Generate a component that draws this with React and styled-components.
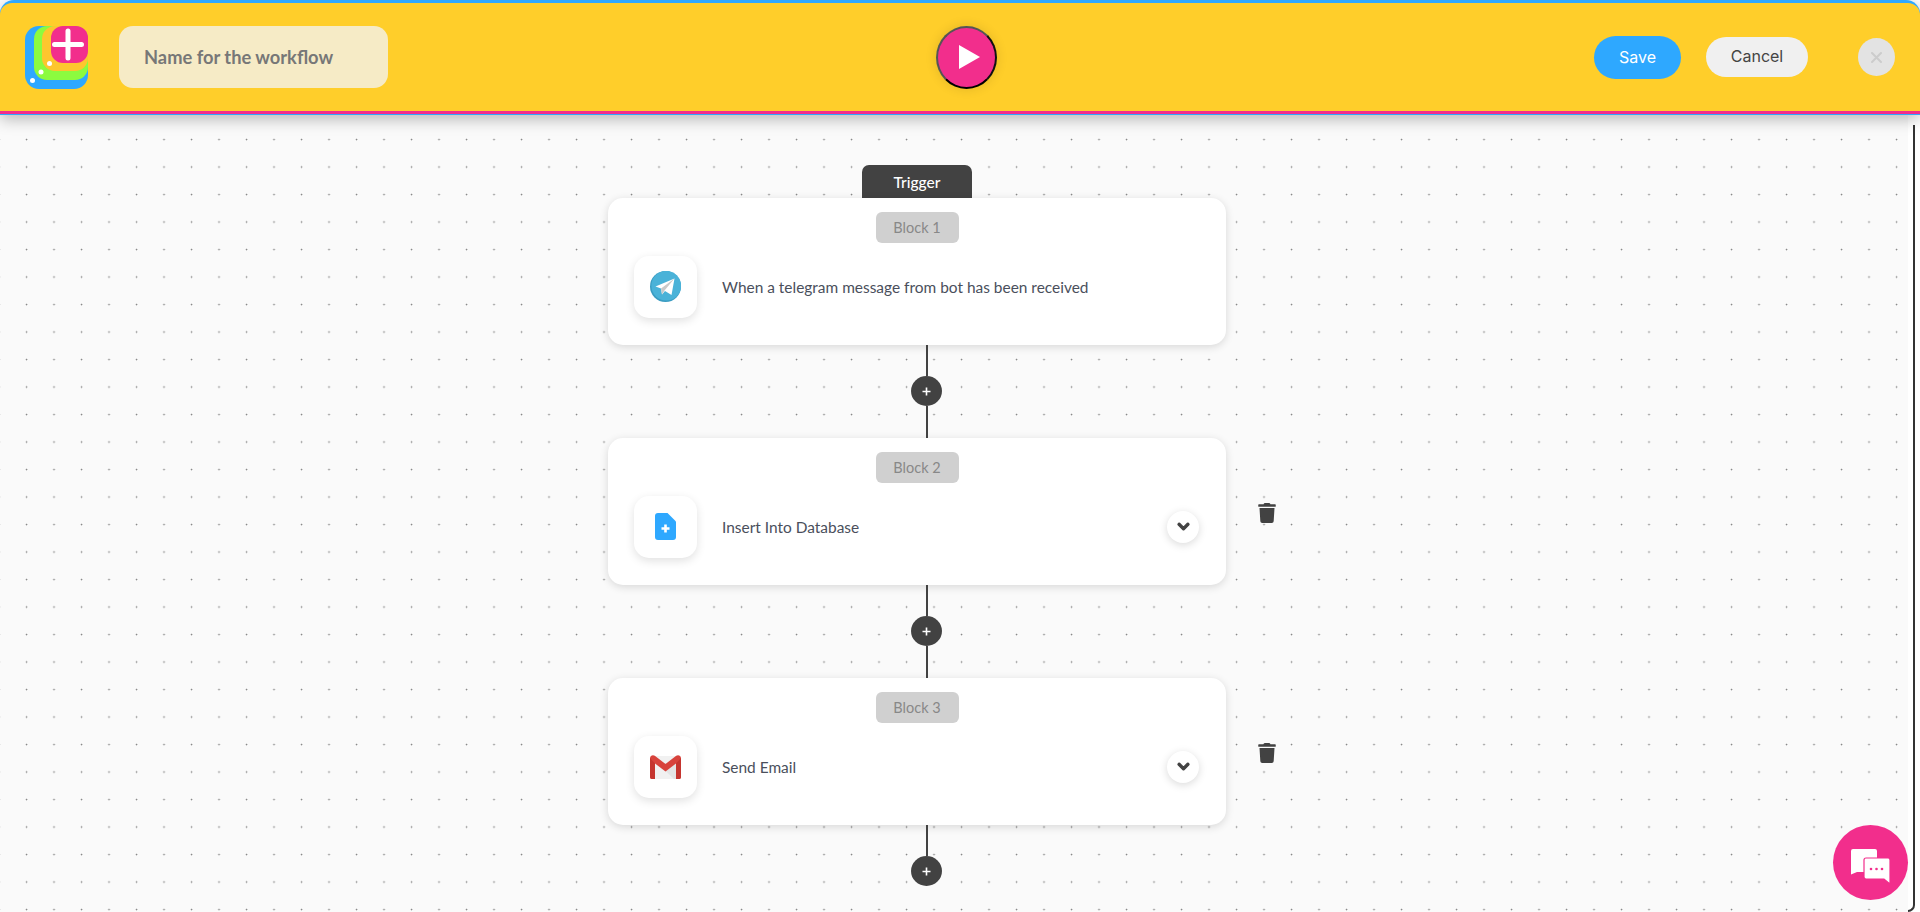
import React from "react";
import styled, { createGlobalStyle } from "styled-components";
import { FaTrash, FaChevronDown } from "react-icons/fa";

const Global = createGlobalStyle`
  html, body { margin: 0; padding: 0; background: #fff; overflow: hidden; }
  * { box-sizing: border-box; }
  body { font-family: "Lato", "Noto Sans", sans-serif; }
`;

const Page = styled.div`
  position: relative;
  width: 1920px;
  height: 912px;
  display: flex;
  flex-direction: column;
  overflow: hidden;
`;
const Header = styled.header`
  position: relative;
  z-index: 2;
  flex: 0 0 115px;
  display: flex;
  background: #2ea8ff;
  border-top: 3px solid #2ea8ff;
  border-bottom: 1px solid #2ea8ff;
  border-radius: 14px 14px 0 0;
  box-shadow: 0 4px 16px rgba(0, 0, 0, 0.28);
`;
const HeaderBar = styled.div`
  flex: 1;
  display: grid;
  grid-template-columns: 936px 61px 1fr;
  align-items: center;
  background: #ffce2a;
  border-bottom: 3px solid #f22e8c;
  border-radius: 12px 12px 0 0;
`;
const HeaderLeft = styled.div`
  display: flex;
  align-items: center;
  gap: 31px;
  padding-left: 25px;
`;
const HeaderRight = styled.div`
  display: flex;
  align-items: center;
  justify-content: flex-end;
  padding-right: 25px;
`;
const NameField = styled.div`
  width: 269px;
  height: 62px;
  display: flex;
  align-items: center;
  padding-left: 25px;
  border-radius: 14px;
  background: #f6ebc6;
  color: #777;
  font: 700 18.3px "Lato", sans-serif;
`;
const PlayButton = styled.button`
  width: 61px;
  height: 63px;
  padding: 0 0 0 5px;
  display: flex;
  align-items: center;
  justify-content: center;
  border-radius: 50%;
  background: #f22e8c;
  border: 2px solid;
  border-color: #555 #111 #000 #555;
  box-shadow: 0 0 12px rgba(0, 0, 0, 0.12);
`;
const SaveButton = styled.button`
  width: 87px;
  height: 43px;
  border: 0;
  border-radius: 22px;
  background: #2ea8ff;
  color: #fff;
  font: 400 16px "Inter", sans-serif;
`;
const CancelButton = styled.button`
  width: 102px;
  height: 40px;
  margin-left: 25px;
  padding: 0 0 2px;
  border: 0;
  border-radius: 20px;
  background: #f0f0f0;
  color: #444;
  font: 400 16px "Inter", sans-serif;
`;
const CloseButton = styled.button`
  width: 37px;
  height: 38px;
  margin-left: 50px;
  padding: 0;
  display: flex;
  align-items: center;
  justify-content: center;
  border: 0;
  border-radius: 50%;
  background: #e3e3e3;
`;
const Main = styled.main`
  flex: 1;
  display: flex;
  min-height: 0;
`;
const Canvas = styled.div`
  flex: 0 0 1908px;
  padding: 50px 0 0 608px;
  background-color: #fafafa;
  background-image: radial-gradient(circle at 1.5px 1.5px, #858585 0.7px, transparent 1.1px);
  background-size: 27.5px 27.5px;
  background-position: 25px 23px;
`;
const Rail = styled.div`
  flex: 1;
  padding: 10px 5px 0 0;
  background: #fff;
`;
const RailLine = styled.div`
  height: 100%;
  border-right: 2px solid #333;
  border-bottom: 2px solid #333;
  border-bottom-right-radius: 10px;
`;
const Flow = styled.div`
  width: 618px;
  display: flex;
  flex-direction: column;
  align-items: center;
`;
const TriggerTab = styled.div`
  width: 110px;
  height: 33px;
  display: flex;
  align-items: center;
  justify-content: center;
  border-radius: 7px 7px 0 0;
  background: #424242;
  color: #fff;
  font: 500 15.5px "Lato", sans-serif;
`;
const BlockRow = styled.div`
  width: 618px;
  display: flex;
  align-items: flex-start;
`;
const Card = styled.section`
  flex: 0 0 618px;
  height: 146.5px;
  display: flex;
  flex-direction: column;
  align-items: center;
  padding-top: 14px;
  border-radius: 15px;
  background: #fff;
  box-shadow: 0 2px 8px rgba(0, 0, 0, 0.14);
`;
const BlockBadge = styled.div`
  width: 83px;
  height: 31px;
  display: flex;
  align-items: center;
  justify-content: center;
  border-radius: 6px;
  background: #d0d0d0;
  color: #888;
  font: 400 14.5px "Lato", sans-serif;
`;
const CardBody = styled.div`
  align-self: stretch;
  display: flex;
  align-items: center;
  gap: 25px;
  margin-top: 12.5px;
  padding: 0 27px 0 26px;
`;
const IconTile = styled.div`
  flex: 0 0 63px;
  height: 62.5px;
  display: flex;
  align-items: center;
  justify-content: center;
  border-radius: 15px;
  background: #fff;
  box-shadow: 0 3px 10px rgba(0, 0, 0, 0.12);
`;
const CardText = styled.div`
  flex: 1;
  color: #4a4f5c;
  font: 400 15.45px "Lato", sans-serif;
`;
const Expand = styled.button`
  width: 32px;
  height: 32px;
  padding: 0;
  display: flex;
  align-items: center;
  justify-content: center;
  border: 0;
  border-radius: 50%;
  background: #fff;
  color: #424242;
  font-size: 13px;
  box-shadow: 0 2px 9px rgba(0, 0, 0, 0.15);
  svg { stroke: #424242; stroke-width: 50; }
`;
const Trash = styled.button`
  flex: none;
  margin: 65px 0 0 31px;
  padding: 0;
  display: flex;
  border: 0;
  background: none;
  color: #424242;
  font-size: 20px;
`;
const Connector = styled.div`
  width: 31px;
  height: 93.5px;
  margin-left: 19px;
  display: flex;
  flex-direction: column;
  align-items: flex-start;
`;
const Wire = styled.div`
  width: 2px;
  flex: 1;
  margin-left: 15px;
  background: #424242;
`;
const AddButton = styled.button`
  flex: 0 0 30px;
  width: 31px;
  padding: 0;
  display: flex;
  align-items: center;
  justify-content: center;
  border: 0;
  border-radius: 50%;
  background: #424242;
`;
const EndSpace = styled.div`
  flex: 1;
`;
const ChatButton = styled.button`
  position: absolute;
  left: 1833px;
  top: 825px;
  z-index: 3;
  width: 75px;
  height: 75px;
  padding: 7px 0 0;
  display: flex;
  align-items: center;
  justify-content: center;
  border: 0;
  border-radius: 50%;
  background: #f22e8c;
`;

const Logo = () => (
  <svg width="63" height="63" viewBox="0 0 63 63">
    <rect width="63" height="63" rx="14" fill="#2ea8ff" />
    <rect x="9" width="54" height="54" rx="13" fill="#8cfb3f" />
    <rect x="17" width="46" height="45" rx="13" fill="#fdc62e" />
    <rect x="26" width="37" height="37" rx="12" fill="#f22e8c" />
    <path d="M29.5 18.5h27M43 5v27" stroke="#fff" strokeWidth="5" strokeLinecap="round" fill="none" />
    <circle cx="7.5" cy="54.5" r="2.5" fill="#fff" />
    <circle cx="16" cy="46" r="2.5" fill="#fff" />
    <circle cx="24.5" cy="37.5" r="2.5" fill="#fff" />
  </svg>
);
const PlayIcon = () => (
  <svg width="21" height="24" viewBox="0 0 21 24">
    <path d="M0 0l21 12L0 24z" fill="#fff" />
  </svg>
);
const CloseIcon = () => (
  <svg width="11" height="11" viewBox="0 0 11 11">
    <path d="M1 1l9 9M10 1l-9 9" stroke="#ccc" strokeWidth="2" strokeLinecap="round" />
  </svg>
);
const TelegramIcon = () => (
  <svg width="31" height="31" viewBox="0 0 31 31">
    <circle cx="15.5" cy="15.5" r="15.5" fill="#3a9cc2" />
    <circle cx="16.3" cy="14.7" r="14.9" fill="#4ab2d8" />
    <path d="M5.5 15.5L24.5 7.5 21.5 24 15 20l-3 3.5-1-6z" fill="#fff" />
    <path d="M11 17.5L24.5 7.5 14.5 19.5 12 23.5z" fill="#c9c9c9" />
  </svg>
);
const FileIcon = () => (
  <svg width="21" height="27" viewBox="0 0 21 27">
    <path d="M3 0h9.5L21 8.5V24a3 3 0 0 1-3 3H3a3 3 0 0 1-3-3V3a3 3 0 0 1 3-3z" fill="#2ea8ff" />
    <path d="M10.5 11.5v8M6.5 15.5h8" stroke="#fff" strokeWidth="2.6" />
  </svg>
);
const GmailIcon = () => (
  <svg width="31" height="24" viewBox="0 0 31 24">
    <path d="M2 1h27v21a2 2 0 0 1-2 2H4a2 2 0 0 1-2-2z" fill="#f1f1f1" />
    <path d="M7 8l17 16h3a2 2 0 0 0 2-2V8z" fill="#e4e4e4" />
    <path d="M0 3a3 3 0 0 1 4.8-2.2L15.5 9 26.2.8A3 3 0 0 1 31 3v19a2 2 0 0 1-2 2h-3V8.5L15.5 16.5 5 8.5V24H2a2 2 0 0 1-2-2z" fill="#d8433c" />
    <path d="M0 3l5 5.5V24H2a2 2 0 0 1-2-2zM31 3l-5 5.5V24h3a2 2 0 0 0 2-2z" fill="#c5352f" />
  </svg>
);
const PlusIcon = () => (
  <svg width="9" height="9" viewBox="0 0 9 9">
    <path d="M4.5 0.5v8M0.5 4.5h8" stroke="#fff" strokeWidth="1.6" />
  </svg>
);
const ChatIcon = () => (
  <svg width="39" height="35" viewBox="0 0 39 35">
    <path d="M2 0h22a2 2 0 0 1 2 2v19a2 2 0 0 1-2 2H6l-6 2.5V2a2 2 0 0 1 2-2z" fill="#fff" />
    <path d="M15 9h22a2 2 0 0 1 2 2v24l-6-5H15a2 2 0 0 1-2-2V11a2 2 0 0 1 2-2z" fill="#fff" stroke="#f22e8c" strokeWidth="1.2" />
    <circle cx="20" cy="20" r="1.3" fill="#f22e8c" />
    <circle cx="25.5" cy="20" r="1.3" fill="#f22e8c" />
    <circle cx="31" cy="20" r="1.3" fill="#f22e8c" />
  </svg>
);

const ConnectorLink = ({ last }) => (
  <Connector>
    <Wire />
    <AddButton aria-label="Add block"><PlusIcon /></AddButton>
    {last ? <EndSpace /> : <Wire />}
  </Connector>
);

const blocks = [
  { label: "Block 1", text: "When a telegram message from bot has been received", icon: <TelegramIcon /> },
  { label: "Block 2", text: "Insert Into Database", icon: <FileIcon />, editable: true },
  { label: "Block 3", text: "Send Email", icon: <GmailIcon />, editable: true },
];

export default function App() {
  return (
    <Page>
      <Global />
      <Header>
        <HeaderBar>
          <HeaderLeft>
            <Logo />
            <NameField>Name for the workflow</NameField>
          </HeaderLeft>
          <PlayButton aria-label="Run"><PlayIcon /></PlayButton>
          <HeaderRight>
            <SaveButton>Save</SaveButton>
            <CancelButton>Cancel</CancelButton>
            <CloseButton aria-label="Close"><CloseIcon /></CloseButton>
          </HeaderRight>
        </HeaderBar>
      </Header>
      <Main>
        <Canvas>
          <Flow>
            <TriggerTab>Trigger</TriggerTab>
            {blocks.map((b, i) => (
              <React.Fragment key={b.label}>
                <BlockRow>
                  <Card>
                    <BlockBadge>{b.label}</BlockBadge>
                    <CardBody>
                      <IconTile>{b.icon}</IconTile>
                      <CardText>{b.text}</CardText>
                      {b.editable && <Expand aria-label="Expand"><FaChevronDown /></Expand>}
                    </CardBody>
                  </Card>
                  {b.editable && <Trash aria-label="Delete"><FaTrash /></Trash>}
                </BlockRow>
                <ConnectorLink last={i === blocks.length - 1} />
              </React.Fragment>
            ))}
          </Flow>
        </Canvas>
        <Rail><RailLine /></Rail>
      </Main>
      <ChatButton aria-label="Chat"><ChatIcon /></ChatButton>
    </Page>
  );
}
